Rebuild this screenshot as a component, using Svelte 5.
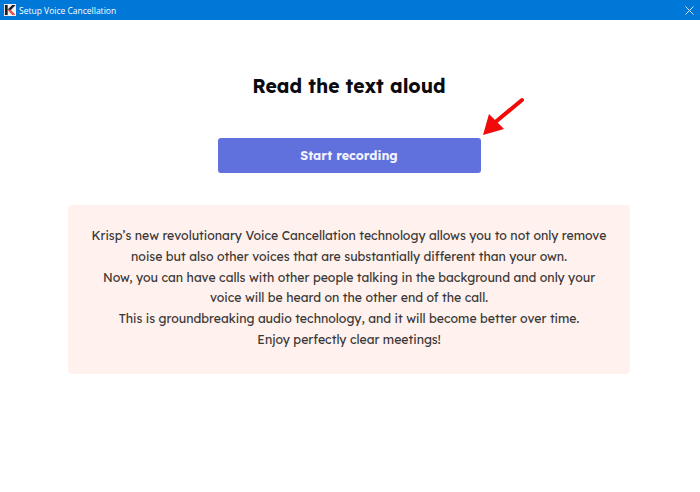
<script>
	const lines = [
		'Krisp’s new revolutionary Voice Cancellation technology allows you to not only remove',
		'noise but also other voices that are substantially different than your own.',
		'Now, you can have calls with other people talking in the background and only your',
		'voice will be heard on the other end of the call.',
		'This is groundbreaking audio technology, and it will become better over time.',
		'Enjoy perfectly clear meetings!'
	];
</script>

<div class="window">
	<header class="titlebar">
		<div class="title">
			<svg class="logo" width="12" height="12" viewBox="0 0 13 13">
				<rect width="13" height="13" fill="#f2f2f2" />
				<path d="M1 1h3v11H1z" fill="#1d1d26" />
				<path d="M4 6 9 1h3.5L7.5 6.5z" fill="#1d1d26" />
				<path d="M4 6.5h3.5l5 5.5H9z" fill="#e8503f" />
			</svg>
			<span>Setup Voice Cancellation</span>
		</div>
		<svg class="close" width="9" height="9" viewBox="0 0 10 10">
			<path d="M.5.5l9 9M9.5.5l-9 9" stroke="#d5e8f8" stroke-width="1.1" fill="none" />
		</svg>
	</header>

	<main class="content">
		<h1>Read the text aloud</h1>
		<div class="action">
			<button type="button">Start recording</button>
			<svg class="arrow" width="44" height="42" viewBox="0 0 44 42">
				<path d="M41 3 12 27" stroke="#f00a0a" stroke-width="4" stroke-linecap="round" fill="none" />
				<path d="M2 38 8 17 23 32z" fill="#f00a0a" />
			</svg>
		</div>
		<section class="note">
			{#each lines as line}
				<p>{line}</p>
			{/each}
		</section>
	</main>
</div>

<style>
	:global(body) {
		margin: 0;
		background: #fff;
	}
	.window {
		width: 700px;
		height: 492px;
		overflow: hidden;
		font-family: 'Lexend', 'Inter', 'Noto Sans', sans-serif;
	}
	.titlebar {
		height: 20px;
		background: #0078d7;
		display: flex;
		align-items: center;
		justify-content: space-between;
		padding: 0 6px 0 4px;
		color: #fff;
	}
	.title {
		display: flex;
		align-items: center;
		gap: 3px;
		font-family: 'Open Sans', 'Noto Sans', sans-serif;
		font-size: 8.5px;
	}
	.logo,
	.close {
		display: block;
	}
	.content {
		width: 698px;
		display: flex;
		flex-direction: column;
		align-items: center;
		padding-top: 53px;
	}
	h1 {
		margin: 0;
		font-size: 19.3px;
		line-height: 26px;
		font-weight: 700;
		color: #0a0a0f;
	}
	.action {
		position: relative;
		margin-top: 39px;
	}
	button {
		display: block;
		width: 263px;
		height: 35px;
		padding: 0 0 2px;
		border: 0;
		border-radius: 3px;
		background: #6070dc;
		color: #f2f3ff;
		font-family: inherit;
		font-weight: 700;
		font-size: 12.5px;
	}
	.arrow {
		position: absolute;
		left: 263px;
		top: -41px;
	}
	.note {
		box-sizing: border-box;
		width: 562px;
		height: 169px;
		margin-top: 32px;
		padding-top: 21px;
		border-radius: 4px;
		background: #fff1ed;
		color: #3a3736;
		text-align: center;
		font-size: 12.3px;
		line-height: 20.8px;
	}
	p {
		margin: 0;
		white-space: nowrap;
	}
</style>
